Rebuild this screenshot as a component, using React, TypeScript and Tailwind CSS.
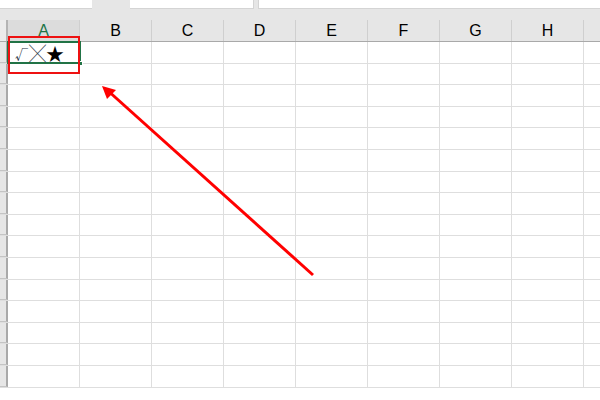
import React from 'react';

const COLS = ['A', 'B', 'C', 'D', 'E', 'F', 'G', 'H', ''];
const ROWS = Array.from({ length: 16 }, (_, i) => i);

export default function App() {
  return (
    <div className="relative w-[600px] h-[400px] overflow-hidden bg-white font-['Liberation_Sans',sans-serif]">
      {/* ribbon remnants at top */}
      <div className="h-[20px] bg-[#e6e6e6]">
        <div className="flex h-[9px] gap-[4px]">
          <div className="w-[92px] bg-white border-b border-[#d4d4d4]" />
          <div className="w-[30px]" />
          <div className="w-[124px] bg-white border-b border-r border-[#d4d4d4]" />
          <div className="flex-1 bg-white border-b border-l border-[#d4d4d4]" />
        </div>
      </div>

      {/* column headers */}
      <div className="flex h-[22px] bg-[#e6e6e6] border-b border-[#a9a9a9]">
        <div className="w-[8px] shrink-0 border-r-2 border-[#b4b4b4] bg-[#ececec]" />
        {COLS.map((c, i) => (
          <div
            key={i}
            className={`w-[72px] shrink-0 flex items-center justify-center border-r border-[#cfcfcf] text-[16px] ${
              c === 'A' ? 'text-[#217346] bg-[#dcdcdc]' : 'text-black'
            }`}
          >
            {c}
          </div>
        ))}
      </div>

      {/* grid body */}
      {ROWS.map((r) => (
        <div key={r} className="flex h-[21.6px] border-b border-[#dedede]">
          <div className="w-[8px] shrink-0 bg-[#e6e6e6] border-r-2 border-[#a9a9a9] border-b border-b-[#c4c4c4]" />
          {COLS.map((c, i) => (
            <div key={i} className="w-[72px] shrink-0 border-r border-[#dedede]" />
          ))}
        </div>
      ))}

      {/* selected cell A1 */}
      <div className="absolute left-[7px] top-[41px] w-[74px] h-[23px] border-2 border-[#217346] flex items-center pl-[6px] text-black font-['Noto_Sans_CJK_SC',sans-serif]">
        <span className="text-[13px] leading-none mt-[2px] mr-[1px] text-[#1f2f44] font-medium">√</span>
        <span className="text-[17px] leading-none text-[#2f3a4a] font-medium">╳</span>
        <span className="text-[18px] leading-none">★</span>
        <div className="absolute right-[-4px] bottom-[-4px] w-[5px] h-[5px] bg-[#217346] border border-white" />
      </div>

      {/* red highlight box */}
      <div className="absolute left-[8px] top-[36px] w-[72px] h-[38px] border-2 border-[#ee1111]" />

      {/* arrow */}
      <svg className="absolute left-0 top-0" width="600" height="400">
        <line x1="313" y1="275" x2="106" y2="89" stroke="#ff0000" strokeWidth="3" />
        <path d="M102 86 L116 90 L107 99 Z" fill="#ff0000" />
      </svg>
    </div>
  );
}
